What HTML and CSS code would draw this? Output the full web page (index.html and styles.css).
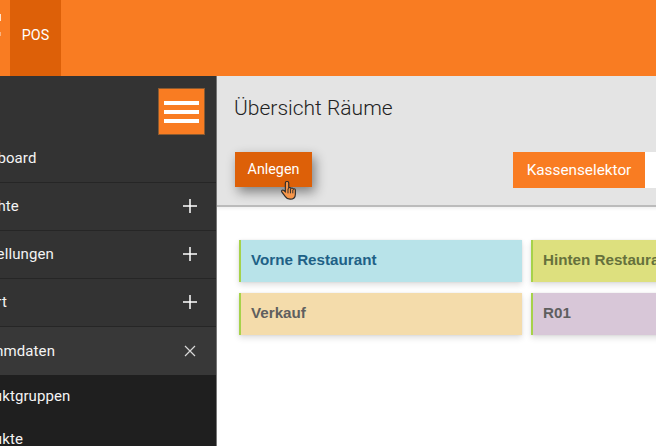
FILE: index.html
```html
<!DOCTYPE html>
<html lang="de">
<head>
<meta charset="utf-8">
<title>Übersicht Räume</title>
<link rel="stylesheet" href="styles.css">
</head>
<body>
<div class="app">
  <header class="topbar">
    <div class="logo"></div>
    <div class="tab">POS</div>
  </header>
  <div class="body">
    <nav class="sidebar">
      <div class="burger-row">
        <button class="burger" aria-label="Menü"><span></span><span></span><span></span></button>
      </div>
      <ul class="menu">
        <li class="item first"><span>Dashboard</span></li>
        <li class="item"><span>Berichte</span>
          <svg class="sign" viewBox="0 0 14 14"><path d="M7 0v14M0 7h14"/></svg></li>
        <li class="item"><span>Einstellungen</span>
          <svg class="sign" viewBox="0 0 14 14"><path d="M7 0v14M0 7h14"/></svg></li>
        <li class="item"><span>Export</span>
          <svg class="sign" viewBox="0 0 14 14"><path d="M7 0v14M0 7h14"/></svg></li>
        <li class="item open"><span>Stammdaten</span>
          <svg class="sign close" viewBox="0 0 14 14"><path d="M2 2l10 10M12 2L2 12"/></svg></li>
      </ul>
      <ul class="submenu">
        <li>Produktgruppen</li>
        <li>Produkte</li>
      </ul>
    </nav>
    <main class="main">
      <section class="head">
        <h1>Übersicht Räume</h1>
        <div class="actions">
          <div class="add">
            <button class="btn-add">Anlegen</button>
            <svg class="hand" viewBox="0 0 18 22">
              <path d="M6 1.5c-.9 0-1.4.7-1.4 1.5v9.3L3.2 11c-.9-.8-2-.6-2.4.1-.3.6-.1 1.300.4 1.900l3.400 4.500c1 1.500 2.300 2.700 5 2.700 3.500 0 5.600-2.200 5.600-5.300v-4.400c0-.8-.6-1.400-1.300-1.400-.4 0-.7.100-.9.400-.2-.8-.8-1.200-1.400-1.200-.5 0-.9.200-1.100.6-.2-.7-.8-1.100-1.400-1.100-.4 0-.7.100-.9.400V3c0-.8-.6-1.500-1.400-1.500z"/>
              <path class="lines" d="M7.400 9v5M10 9.500v4.500M12.500 10.500v3.500"/>
            </svg>
          </div>
          <div class="selector">
            <div class="selector-label">Kassenselektor</div>
            <div class="selector-field"></div>
          </div>
        </div>
      </section>
      <section class="cards">
        <div class="card blue">Vorne Restaurant</div>
        <div class="card lime">Hinten Restaurant</div>
        <div class="card sand">Verkauf</div>
        <div class="card mauve">R01</div>
      </section>
    </main>
  </div>
</div>
</body>
</html>
```
FILE: styles.css
```css
* { box-sizing: border-box; }
html, body { margin: 0; padding: 0; height: 100%; overflow: hidden; background: #fff; }
body { font-family: Roboto, "Liberation Sans", sans-serif; }

.app { width: 1000px; height: 446px; margin-left: -44px; display: flex; flex-direction: column; }

.topbar { height: 76px; background: #f97c22; display: flex; align-items: stretch; flex: none; }
.logo { width: 54px; background: linear-gradient(#ffe3cc, #ffe3cc) 43px 14px / 2px 7px no-repeat, linear-gradient(#fbb27c, #fbb27c) 43px 32px / 2px 4px no-repeat; }
.tab { width: 51px; background: #dd6008; color: #fff; font-size: 14.300px; display: flex; align-items: center; justify-content: center; padding-bottom: 6px; }

.body { display: flex; flex: 1; min-height: 0; }

.sidebar { width: 260px; flex: none; background: #333; color: #f4f4f4; overflow: hidden; }
.burger-row { display: flex; justify-content: flex-end; padding: 12px 11px 0 0; height: 59px; }
.burger { width: 47px; height: 47px; padding: 0; background: #f97c22; border: 1px solid #8a5a30; display: flex; flex-direction: column; justify-content: center; align-items: center; gap: 5px; }
.burger span { display: block; width: 35px; height: 4px; background: #fff; }

.menu, .submenu { list-style: none; margin: 0; padding: 0; }
.item { height: 48px; padding: 0 19px 1px 7px; border-bottom: 1px solid #262626; display: flex; align-items: center; justify-content: space-between; font-size: 15px; letter-spacing: .1px; }
.item.open { background: #383838; border-bottom: 0; padding: 0 19px 0 12px; }
.sign { width: 14px; height: 14px; fill: none; stroke: #fff; stroke-width: 1.500; }
.sign.close { stroke: #d8d8d8; stroke-width: 1.200; }

.submenu { background: #1f1f1f; height: 100px; }
.submenu li { height: 42px; margin-bottom: 1px; padding-left: 6px; display: flex; align-items: center; font-size: 15px; letter-spacing: .1px; }

.main { flex: 1; min-width: 0; background: #fff; border-left: 1px solid #777; }
.head { height: 131px; background: #e4e4e4; border-bottom: 2px solid #bbb; padding: 20px 0 0 17px; box-shadow: 0 2px 3px rgba(0,0,0,.06); }
h1 { margin: 0; font-size: 21px; font-weight: 300; color: #222; line-height: 24px; }
.actions { display: flex; align-items: flex-start; margin: 32px 0 0 1px; }
.add { position: relative; width: 278px; flex: none; }
.btn-add { width: 77px; height: 35px; padding: 0 0 2px; border: 0; background: #dd6008; color: #fff; font: 14.300px Roboto, sans-serif; box-shadow: 3px 5px 12px rgba(0,0,0,.45); }
.hand { position: absolute; left: 46px; top: 28px; width: 17px; height: 21px; fill: #f6964a; stroke: #2b2b2b; stroke-width: 1.200; }
.hand .lines { fill: none; stroke-width: 1; }
.selector { display: flex; }
.selector-label { width: 132px; height: 36px; padding-bottom: 1px; background: #f97c22; color: #fff; font-size: 15.300px; display: flex; align-items: center; justify-content: center; }
.selector-field { width: 200px; height: 36px; background: #fff; }

.cards { display: grid; grid-template-columns: 283px 283px; gap: 11px 9px; padding: 33px 0 0 22px; }
.card { height: 42px; border-left: 2px solid #a6d24a; padding: 0 0 3px 10px; display: flex; align-items: center; font: bold 15.200px "Liberation Sans", Arial, sans-serif; color: #5f5f5f; box-shadow: 0 3px 6px rgba(0,0,0,.13), 0 0 2px rgba(0,0,0,.08); }
.blue { background: #b8e3e9; color: #1e6186; }
.lime { background: #dde07e; color: #66713c; }
.sand { background: #f4dcab; }
.mauve { background: #d8c7d8; }
```
